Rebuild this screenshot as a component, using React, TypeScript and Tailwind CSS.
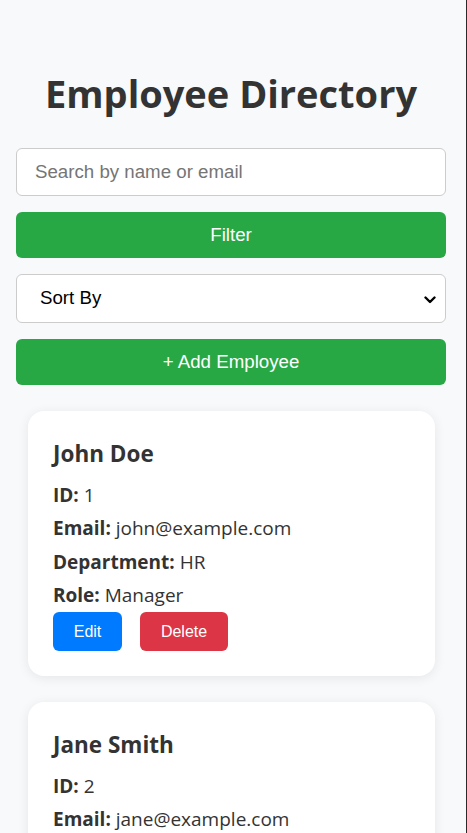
import React from "react";

const employees = [
  { id: 1, name: "John Doe", email: "john@example.com", department: "HR", role: "Manager" },
  { id: 2, name: "Jane Smith", email: "jane@example.com", department: "IT", role: "Developer" },
];

const sans = { fontFamily: '"Open Sans", "Noto Sans", sans-serif' };
const arial = { fontFamily: '"Liberation Sans", Arial, sans-serif' };

function Row({ label, value }: { label: string; value: string | number }) {
  return (
    <div className="text-[19px] leading-[33.3px] text-[#333]">
      <span className="font-bold">{label}:</span> {value}
    </div>
  );
}

export default function App() {
  return (
    <div className="flex min-h-screen bg-[#f8f9fa]">
      <div className="flex-1 pl-4 pr-5" style={sans}>
        <h1 className="pt-[69px] pb-[31px] text-center text-[38px] font-bold leading-[48px] text-[#333]">
          Employee Directory
        </h1>
        <div className="flex flex-col gap-4" style={arial}>
          <input
            className="h-[48px] w-full rounded-[6px] border border-[#ccc] bg-white pl-[18px] text-[18.7px] text-black outline-none placeholder:text-[#757575]"
            placeholder="Search by name or email"
          />
          <button className="h-[46px] w-full rounded-[6px] bg-[#28a745] text-[18.7px] text-white">
            Filter
          </button>
          <div className="relative h-[49px] w-full rounded-[6px] border border-[#ccc] bg-white">
            <div className="flex h-full items-center justify-between pl-[23px] pr-[9px] text-[18.7px] text-black">
              <span>Sort By</span>
              <svg width="12" height="8" viewBox="0 0 12 8" className="mt-[2px]">
                <path d="M1.5 1.5 L6 6 L10.5 1.5" fill="none" stroke="#000" strokeWidth="2.4" strokeLinecap="round" strokeLinejoin="round" />
              </svg>
            </div>
          </div>
          <button className="h-[46px] w-full rounded-[6px] bg-[#28a745] text-[18.7px] text-white">
            + Add Employee
          </button>
        </div>
        <div className="mt-[26px] flex flex-col gap-[26px] pl-3 pr-[11px]">
          {employees.map((e) => (
            <div
              key={e.id}
              className="rounded-[16px] bg-white px-[25px] pt-[29px] pb-[25px] shadow-[0_2px_12px_rgba(0,0,0,0.08)]"
            >
              <h3 className="mb-[11px] text-[22.5px] font-bold leading-[28px] text-[#333]">{e.name}</h3>
              <Row label="ID" value={e.id} />
              <Row label="Email" value={e.email} />
              <Row label="Department" value={e.department} />
              <Row label="Role" value={e.role} />
              <div className="flex gap-[18px]" style={arial}>
                <button className="h-[39px] w-[69px] rounded-[6px] bg-[#007bff] text-[16px] text-white">Edit</button>
                <button className="h-[39px] w-[88px] rounded-[6px] bg-[#dc3545] text-[16px] text-white">Delete</button>
              </div>
            </div>
          ))}
        </div>
      </div>
      <div className="w-px shrink-0 bg-[#2a2a2a]" />
    </div>
  );
}
